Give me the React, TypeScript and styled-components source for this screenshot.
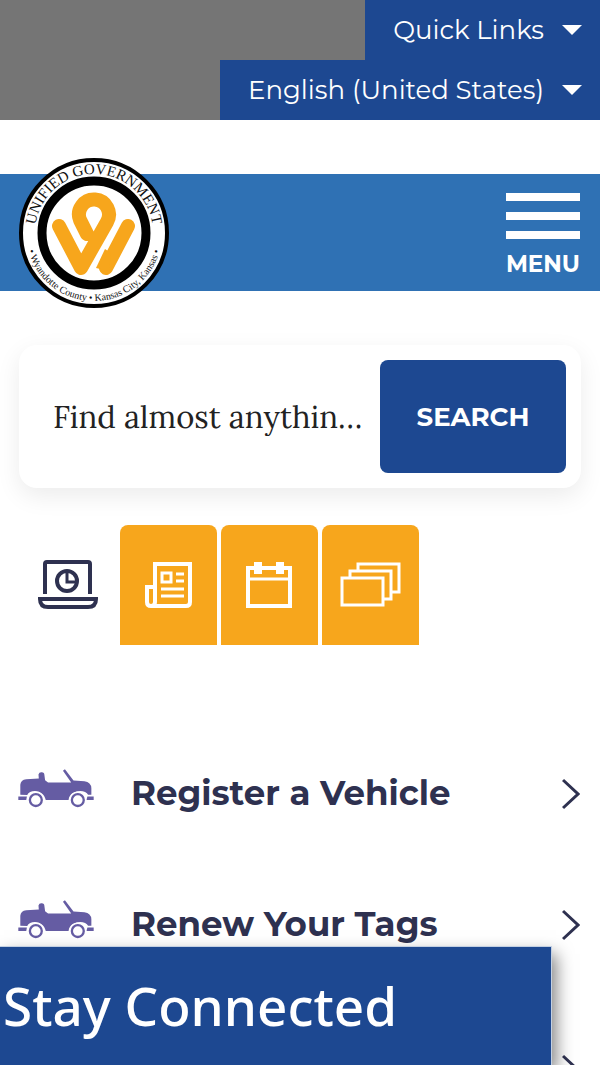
import React from "react";
import styled, { createGlobalStyle } from "styled-components";

const GlobalStyle = createGlobalStyle`
  * {
    box-sizing: border-box;
  }
  body {
    margin: 0;
    background: #ffffff;
    color: #2e3150;
    font-family: Montserrat, Inter, "Liberation Sans", sans-serif;
  }
`;

const TopBar = styled.div`
  display: flex;
  flex-direction: column;
  align-items: flex-end;
  background: #757575;
`;

const TopButton = styled.button`
  display: flex;
  align-items: center;
  gap: 18px;
  height: 60px;
  padding: 0 18px 0 28px;
  border: 0;
  background: #1d4891;
  color: #ffffff;
  font-family: inherit;
  font-size: 26px;
  font-weight: 400;
  cursor: pointer;
`;

const Caret = styled.span`
  border: 10px solid transparent;
  border-top-color: #ffffff;
  border-bottom: 0;
`;

const Header = styled.header`
  display: flex;
  align-items: center;
  justify-content: space-between;
  height: 117px;
  margin-top: 54px;
  padding: 0 20px 0 19px;
  background: #2f71b4;
`;

const LogoLink = styled.a`
  display: block;
  margin: -20px 0;

  svg {
    display: block;
  }
`;

const MenuButton = styled.button`
  display: flex;
  flex-direction: column;
  align-items: center;
  gap: 11px;
  padding: 6px 0 0;
  border: 0;
  background: none;
  color: #ffffff;
  font-family: inherit;
  font-size: 23px;
  font-weight: 700;
  line-height: 28px;
  cursor: pointer;
`;

const MenuBar = styled.span`
  width: 74px;
  height: 8px;
  background: #ffffff;
`;

const SearchForm = styled.form`
  display: flex;
  gap: 16px;
  margin: 54px 19px 37px;
  padding: 15px 15px 15px 34px;
  border-radius: 18px;
  background: #ffffff;
  box-shadow: 0 8px 24px rgba(0, 0, 0, 0.08);
`;

const SearchInput = styled.input`
  flex: 1;
  min-width: 0;
  padding: 0;
  border: 0;
  outline: 0;
  background: none;
  color: #222222;
  font-family: Lora, "Liberation Serif", serif;
  font-size: 31px;
  text-overflow: ellipsis;

  &::placeholder {
    color: #222222;
    opacity: 1;
  }
`;

const SearchButton = styled.button`
  width: 186px;
  height: 113px;
  border: 0;
  border-radius: 8px;
  background: #1d4891;
  color: #ffffff;
  font-family: inherit;
  font-size: 26px;
  font-weight: 700;
  cursor: pointer;
`;

const Tabs = styled.div`
  display: flex;
  gap: 4px;
  padding: 0 19px;
`;

const Tab = styled.button<{ $active?: boolean }>`
  display: flex;
  align-items: center;
  justify-content: center;
  width: 97px;
  height: 120px;
  padding: 0;
  border: 0;
  border-radius: 8px 8px 0 0;
  background: ${({ $active }) => ($active ? "#ffffff" : "#f7a61c")};
  color: ${({ $active }) => ($active ? "#2e3150" : "#ffffff")};
  cursor: pointer;
`;

const ServiceList = styled.ul`
  margin: 82px 0 0;
  padding: 0;
  list-style: none;
`;

const ServiceLink = styled.a<{ $tall?: boolean }>`
  display: flex;
  align-items: center;
  gap: 37px;
  height: ${({ $tall }) => ($tall ? 160 : 131)}px;
  padding: 0 20px 0 18px;
  color: inherit;
  font-size: 34px;
  font-weight: 700;
  text-decoration: none;

  svg {
    flex: none;
  }
  svg:first-child {
    margin-bottom: 8px;
  }
`;

const ServiceName = styled.span`
  flex: 1;
`;

const StayConnected = styled.aside`
  position: fixed;
  bottom: 0;
  left: 0;
  display: flex;
  align-items: center;
  width: 92%;
  height: 119px;
  padding: 0 3px;
  border: solid #c3d0e2;
  border-width: 1px 1px 0 0;
  background: #1d4891;
  box-shadow: 4px 8px 16px rgba(0, 0, 0, 0.5);
`;

const StayTitle = styled.h2`
  margin: 0;
  color: #ffffff;
  font-family: "Noto Sans", sans-serif;
  font-size: 53px;
  font-weight: 500;
  line-height: 64px;
`;

const Logo: React.FC = () => (
  <svg width="150" height="150" viewBox="0 0 150 150" aria-hidden="true">
    <defs>
      <path id="seal-top" d="M16 75a59 59 0 0 1 118 0" />
      <path id="seal-bottom" d="M7 75a68 68 0 0 0 136 0" />
    </defs>
    <circle cx="75" cy="75" r="73" fill="#fff" stroke="#000" strokeWidth="4" />
    <circle cx="75" cy="75" r="52" fill="#fff" stroke="#000" strokeWidth="9" />
    <g fontFamily="Liberation Serif, serif" fill="#111" textAnchor="middle">
      <text fontSize="15">
        <textPath href="#seal-top" startOffset="50%">
          UNIFIED GOVERNMENT
        </textPath>
      </text>
      <text fontSize="10">
        <textPath href="#seal-bottom" startOffset="50%">
          • Wyandotte County • Kansas City, Kansas •
        </textPath>
      </text>
    </g>
    <g fill="none" stroke="#f7a61c" strokeWidth="14" strokeLinecap="round" strokeLinejoin="round">
      <path d="M40 68 62 110 88 64A15 15 0 1 0 61 62L68 76" />
      <path d="M87 110 109 68" />
    </g>
    <path fill="#f7a61c" d="m86 91 6 4-2 18-13-3z" />
  </svg>
);

const LaptopIcon: React.FC = () => (
  <svg width="60" height="50" viewBox="0 0 60 50" fill="none" stroke="currentColor" strokeWidth="4" aria-hidden="true">
    <path d="M7 34V4Q7 2 9 2H50Q52 2 52 4V34M2 39H58Q58 47 50 47H10Q2 47 2 39Z" />
    <circle cx="29" cy="21" r="10" />
    <path d="M29 11V22H39" strokeWidth="3" />
  </svg>
);

const NewsIcon: React.FC = () => (
  <svg width="48" height="46" viewBox="0 0 48 46" fill="none" stroke="currentColor" strokeWidth="4" aria-hidden="true">
    <path d="M10 40V2H45V40Q45 44 41 44H6Q2 44 2 40V25H10V40Q10 44 6 44" />
    <path d="M17 11H26V20H17ZM31 12H39M31 19H39M16 27H39M16 34H39" strokeWidth="3" />
  </svg>
);

const CalendarIcon: React.FC = () => (
  <svg width="48" height="46" viewBox="0 0 48 46" fill="none" stroke="currentColor" strokeWidth="4" aria-hidden="true">
    <path d="M2 6H44V44H2Z" />
    <path d="M2 17H44" strokeWidth="3" />
    <path d="M12 0V12M34 0V12" strokeWidth="8" />
  </svg>
);

const CardsIcon: React.FC = () => (
  <svg width="61" height="46" viewBox="0 0 61 46" fill="none" stroke="currentColor" strokeWidth="3" aria-hidden="true">
    <path d="M2 16H43V43H2ZM10 16V9H51V37H43M18 9V2H59V30H51" />
  </svg>
);

const CarIcon: React.FC = () => (
  <svg width="76" height="39" viewBox="14 14 228 118" fill="#655ca3" aria-hidden="true">
    <path d="M20 92V62Q21 47 38 45L76 43 75 31Q77 23 85 24 93 24 93 33L95 48 104 55H174L149 19 155 15 181 49 214 51Q234 54 235 72V92H225C218 75 170 75 166 108H97C91 75 49 74 41 93Z" />
    <path d="M14 97H40L38 108H14ZM223 97H242V108H220Z" />
    <circle cx="67" cy="108" r="26" fill="#fff" />
    <circle cx="194" cy="108" r="26" fill="#fff" />
    <circle cx="67" cy="108" r="18" fill="#fff" stroke="#655ca3" strokeWidth="7" />
    <circle cx="194" cy="108" r="18" fill="#fff" stroke="#655ca3" strokeWidth="7" />
  </svg>
);

const Chevron: React.FC = () => (
  <svg width="18" height="34" viewBox="0 0 18 34" fill="none" stroke="currentColor" strokeWidth="3" aria-hidden="true">
    <path d="M1 4 16 18 1 32" />
  </svg>
);

const services = ["Register a Vehicle", "Renew Your Tags", ""];

const App: React.FC = () => (
  <>
    <GlobalStyle />
    <TopBar>
      <TopButton type="button">
        Quick Links
        <Caret />
      </TopButton>
      <TopButton type="button">
        English (United States)
        <Caret />
      </TopButton>
    </TopBar>
    <Header>
      <LogoLink href="#" aria-label="Unified Government home">
        <Logo />
      </LogoLink>
      <MenuButton type="button">
        <MenuBar />
        <MenuBar />
        <MenuBar />
        MENU
      </MenuButton>
    </Header>
    <main>
      <SearchForm role="search">
        <SearchInput
          type="text"
          aria-label="Search"
          placeholder="Find almost anythin…"
        />
        <SearchButton type="button">SEARCH</SearchButton>
      </SearchForm>
      <Tabs>
        <Tab type="button" $active aria-label="Online services">
          <LaptopIcon />
        </Tab>
        <Tab type="button" aria-label="News">
          <NewsIcon />
        </Tab>
        <Tab type="button" aria-label="Calendar">
          <CalendarIcon />
        </Tab>
        <Tab type="button" aria-label="Departments">
          <CardsIcon />
        </Tab>
      </Tabs>
      <ServiceList>
        {services.map((name) => (
          <li key={name}>
            <ServiceLink href="#" $tall={!name} aria-label={name || "More services"}>
              <CarIcon />
              <ServiceName>{name}</ServiceName>
              <Chevron />
            </ServiceLink>
          </li>
        ))}
      </ServiceList>
    </main>
    <StayConnected>
      <StayTitle>Stay Connected</StayTitle>
    </StayConnected>
  </>
);

export default App;
